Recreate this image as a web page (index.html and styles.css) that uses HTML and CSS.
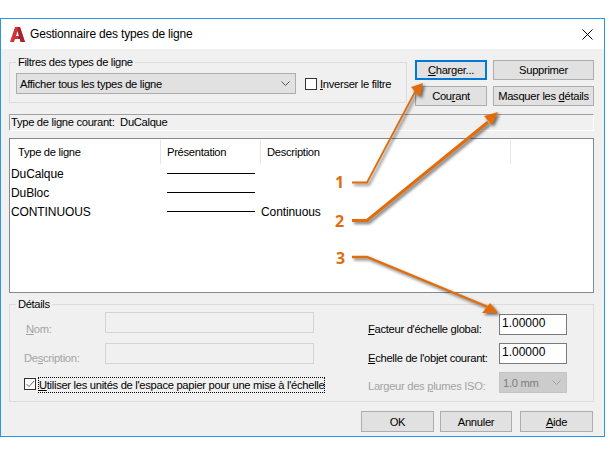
FILE: index.html
```html
<!DOCTYPE html>
<html lang="fr">
<head>
<meta charset="utf-8">
<title>Gestionnaire des types de ligne</title>
<link rel="stylesheet" href="styles.css">
</head>
<body>
<div class="window">
  <header class="titlebar">
    <svg class="app-icon" viewBox="0 0 15 15"><path class="a-main" fill-rule="evenodd" d="M0 15 5 0h5l5 15h-4.300l-.8-3H5l-1 3zM7.600 4 6 9h3z"/><path class="a-shade" d="M7.500 0H10l5 15h-4.300l-.8-3H8V9h1L7.600 4z"/></svg>
    <span class="title">Gestionnaire des types de ligne</span>
    <svg class="close" viewBox="0 0 11 11"><path d="M.5.500l10 10M10.500.500l-10 10"/></svg>
  </header>
  <main class="content">
    <section class="top-row">
      <fieldset class="group filters">
        <legend>Filtres des types de ligne</legend>
        <div class="filter-row">
          <div class="combo">
            <span>Afficher tous les types de ligne</span>
            <svg class="chevron" viewBox="0 0 9 5"><path d="M.5.500l4 4 4-4"/></svg>
          </div>
          <span class="checkbox"></span>
          <span class="check-label"><u>I</u>nverser le filtre</span>
        </div>
      </fieldset>
      <div class="top-buttons">
        <button class="btn btn-default"><u>C</u>harger...</button>
        <button class="btn">Supprimer</button>
        <button class="btn">Cou<u>r</u>ant</button>
        <button class="btn">Masquer les <u>d</u>étails</button>
      </div>
    </section>
    <div class="current-line">Type de ligne courant:&nbsp; DuCalque</div>
    <section class="list">
      <div class="list-head">
        <div class="head-cell head-name">Type de ligne</div>
        <div class="head-cell head-pres">Présentation</div>
        <div class="head-cell head-desc">Description</div>
      </div>
      <div class="list-row"><span>DuCalque</span><span class="sample"></span><span></span></div>
      <div class="list-row"><span>DuBloc</span><span class="sample"></span><span></span></div>
      <div class="list-row"><span>CONTINUOUS</span><span class="sample"></span><span>Continuous</span></div>
    </section>
    <fieldset class="group details">
      <legend>Détails</legend>
      <div class="details-body">
        <div class="details-left">
          <div class="field-grid">
            <span class="label disabled label-nom"><u>N</u>om:</span>
            <div class="field-off"></div>
            <span class="label disabled">De<u>s</u>cription:</span>
            <div class="field-off"></div>
          </div>
          <div class="paper-row">
            <span class="checkbox checked"><svg viewBox="0 0 10 10"><path d="M1.500 5l2.500 2.500L9 2"/></svg></span>
            <span class="focus-label"><u>U</u>tiliser les unités de l'espace papier pour une mise à l'échelle</span>
          </div>
        </div>
        <div class="scale-grid">
          <span class="label"><u>F</u>acteur d'échelle global:</span>
          <div class="field">1.00000</div>
          <span class="label"><u>E</u>chelle de l'objet courant:</span>
          <div class="field">1.00000</div>
          <span class="label disabled label-iso">Largeur des <u>p</u>lumes ISO:</span>
          <div class="combo-off">1.0 mm<svg class="chevron" viewBox="0 0 9 5"><path d="M.5.500l4 4 4-4"/></svg></div>
        </div>
      </div>
    </fieldset>
    <footer class="footer">
      <button class="btn btn-ok">OK</button>
      <button class="btn btn-cancel">Annuler</button>
      <button class="btn btn-ok"><u>A</u>ide</button>
    </footer>
  </main>
</div>
<svg class="callouts" viewBox="0 0 610 455">
  <text class="num" x="335" y="188">1</text>
  <text class="num" x="335" y="227">2</text>
  <text class="num" x="336" y="264">3</text>
  <g class="arrows">
    <path class="thin" d="M352 182.500h15L416 90"/>
    <path class="head" d="M423 83 411 87 420 97z"/>
    <path class="thick" d="M352 220.500h15L488 122"/>
    <path class="head" d="M498 112 484 116 492 125z"/>
    <path class="mid" d="M352 257h15L488 307"/>
    <path class="head" d="M498 313 490 303 482 313z"/>
  </g>
</svg>
</body>
</html>
```
FILE: styles.css
```css
* { box-sizing: border-box; }
html, body { margin: 0; padding: 0; }
body {
  width: 610px;
  height: 455px;
  background: #fff;
  overflow: hidden;
  font-family: "Liberation Sans", Arial, sans-serif;
  font-size: 11.200px;
  letter-spacing: -0.300px;
  line-height: 16px;
  color: #000;
}
u { text-underline-offset: 1px; }
.window {
  width: 605px;
  height: 419px;
  margin-top: 18px;
  border: 1px solid #2b95e6;
  display: flex;
  flex-direction: column;
  background: #f0f0f0;
}
.titlebar {
  height: 30px;
  flex: none;
  background: #fff;
  display: flex;
  align-items: center;
  padding: 0 11px 0 9px;
}
.app-icon { width: 15px; height: 15px; flex: none; }
.a-main { fill: #d2333a; }
.a-shade { fill: #a8232b; }
.title { margin-left: 5px; flex: 1; font-size: 12px; letter-spacing: -0.180px; }
.close { width: 11px; height: 11px; fill: none; stroke: #000; stroke-width: 1; }
.content { padding: 6px 10px 0 8px; flex: 1; }
.top-row { display: flex; align-items: flex-start; gap: 8px; }
.group {
  margin: 0;
  padding: 0;
  min-width: 0;
  border: 1px solid #dcdcdc;
}
.group legend {
  margin-left: 6px;
  padding: 0 2px;
  line-height: 14px;
  letter-spacing: -0.350px;
}
.filters { width: 398px; height: 48px; }
.filter-row { display: flex; align-items: center; padding: 4px 0 0 6px; }
.combo {
  width: 280px;
  height: 21px;
  border: 1px solid #adadad;
  background: #e1e1e1;
  display: flex;
  align-items: center;
  justify-content: space-between;
  padding: 0 4px 0 3px;
}
.chevron { width: 9px; height: 5px; fill: none; stroke: #555; stroke-width: 1; margin-right: 1px; }
.checkbox {
  width: 12px;
  height: 12px;
  flex: none;
  margin-left: 9px;
  border: 1px solid #333;
  background: #fff;
  display: block;
}
.check-label { margin-left: 3px; }
.top-buttons {
  margin-top: 5px;
  display: grid;
  grid-template-columns: 72px 101px;
  grid-auto-rows: 20px;
  gap: 6px;
}
.btn {
  margin: 0;
  padding: 0;
  font: inherit;
  letter-spacing: inherit;
  color: #000;
  background: #e1e1e1;
  border: 1px solid #adadad;
  text-align: center;
  white-space: nowrap;
}
.btn-default { border: 2px solid #0078d7; }
.current-line {
  margin-top: 8px;
  height: 17px;
  padding-left: 1px;
  line-height: 15px;
  border: 1px solid;
  border-color: #a0a0a0 #fff #fff #a0a0a0;
}
.list {
  margin-top: 7px;
  height: 155px;
  background: #fff;
  border: 1px solid #7f8a96;
}
.list-head { display: flex; height: 25px; padding-top: 1px; }
.head-cell { border-right: 1px solid #e5e5e5; line-height: 24px; }
.head-name { width: 151px; padding-left: 8px; }
.head-pres { width: 100px; padding-left: 6px; }
.head-desc { width: 250px; padding-left: 6px; }
.list-row {
  display: grid;
  grid-template-columns: 150px 88px auto;
  column-gap: 6px;
  align-items: center;
  height: 19px;
  padding-left: 1px;
  font-size: 12px;
  letter-spacing: -0.100px;
}
.sample { height: 1px; background: #000; }
.details { height: 105px; margin-top: 4px; }
.details-body { display: flex; gap: 54px; padding: 1px 0 0 14px; }
.details-left { width: 290px; flex: none; }
.field-grid {
  display: grid;
  grid-template-columns: 81px 209px;
  grid-template-rows: 21px 21px;
  row-gap: 10px;
}
.label { margin-top: 7px; white-space: nowrap; height: 14px; }
.label-nom { margin-top: 9px; margin-left: 2px; }
.label-iso { margin-top: 6px; }
.disabled { color: #a3a3a3; }
.field-off { border: 1px solid #d4d4d4; background: #f0f0f0; }
.paper-row { display: flex; align-items: flex-start; margin-top: 13px; }
.paper-row .checkbox { margin: 1px 0 0; background: #fff; }
.checked svg { display: block; width: 10px; height: 10px; fill: none; stroke: #666; stroke-width: 1; }
.focus-label {
  margin-left: 2px;
  padding: 0 1px;
  height: 16px;
  outline: 1px dotted #000;
  outline-offset: -1px;
  white-space: nowrap;
}
.scale-grid {
  margin-top: 2px;
  display: grid;
  grid-template-columns: 131px 68px;
  grid-template-rows: 21px 21px 21px;
  row-gap: 8px;
}
.field {
  background: #fff;
  border: 1px solid #7a7a7a;
  padding-left: 2px;
  line-height: 16px;
  font-size: 12px;
  letter-spacing: 0;
}
.combo-off {
  background: #cccccc;
  border: 1px solid #c4c4c4;
  color: #7d7d7d;
  display: flex;
  align-items: center;
  justify-content: space-between;
  padding: 0 4px 0 3px;
}
.combo-off .chevron { stroke: #a3a3a3; }
.footer { display: flex; margin-top: 9px; padding-left: 352px; }
.footer .btn { height: 21px; }
.btn-ok { width: 73px; }
.btn-cancel { width: 72px; margin: 0 8px 0 6px; }
.callouts {
  position: absolute;
  left: 0;
  top: 0;
  width: 610px;
  height: 455px;
  pointer-events: none;
}
.num {
  font-family: "Open Sans", sans-serif;
  font-size: 16px;
  font-weight: 700;
  letter-spacing: 0;
  fill: #e36c0a;
}
.arrows { filter: drop-shadow(2px 2px 1.500px rgba(0,0,0,.55)); }
.thin { fill: none; stroke: #e36c0a; stroke-width: 1.800; }
.mid { fill: none; stroke: #e36c0a; stroke-width: 2.400; }
.thick { fill: none; stroke: #e36c0a; stroke-width: 3; }
.head { fill: #e36c0a; }
```
